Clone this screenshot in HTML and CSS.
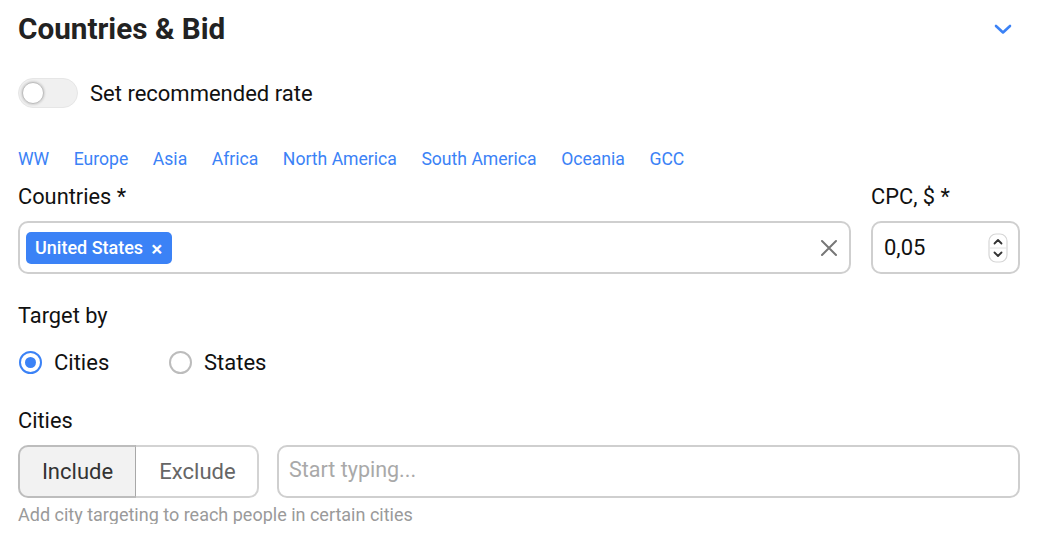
FILE: index.html
```html
<!DOCTYPE html>
<html>
<head>
<meta charset="utf-8">
<link rel="stylesheet" href="styles.css">
</head>
<body>
<div class="page">
  <div class="header">
    <h1 class="title">Countries &amp; Bid</h1>
    <svg class="chevron" width="18" height="11" viewBox="0 0 18 11"><path d="M2 2 L9 8.5 L16 2" fill="none" stroke="#3b82f6" stroke-width="2.6" stroke-linecap="round" stroke-linejoin="round"/></svg>
  </div>

  <div class="toggle-row">
    <span class="toggle"><span class="knob"></span></span>
    <span class="toggle-label">Set recommended rate</span>
  </div>

  <div class="regions">
    <a>WW</a><a>Europe</a><a>Asia</a><a>Africa</a><a>North America</a><a>South America</a><a>Oceania</a><a>GCC</a>
  </div>

  <div class="fields">
    <div class="field countries">
      <div class="label">Countries *</div>
      <div class="box countries-box">
        <span class="chip">United States <span class="chip-x">×</span></span>
        <svg class="clear" width="18" height="18" viewBox="0 0 18 18"><path d="M2 2 L16 16 M16 2 L2 16" stroke="#777" stroke-width="2" stroke-linecap="round"/></svg>
      </div>
    </div>
    <div class="field cpc">
      <div class="label">CPC, $ *</div>
      <div class="box cpc-box">
        <span class="value">0,05</span>
        <svg class="spin" width="20" height="30" viewBox="0 0 20 30"><rect x="1" y="1" width="18" height="28" rx="7" fill="#fff" stroke="#d6d6d6" stroke-width="1.2"/><line x1="1.5" y1="15" x2="18.5" y2="15" stroke="#e2e2e2" stroke-width="1"/><path d="M6.5 10.5 L10 7 L13.5 10.5" fill="none" stroke="#333" stroke-width="1.8" stroke-linecap="round" stroke-linejoin="round"/><path d="M6.5 19.5 L10 23 L13.5 19.5" fill="none" stroke="#333" stroke-width="1.8" stroke-linecap="round" stroke-linejoin="round"/></svg>
      </div>
    </div>
  </div>

  <div class="label target-label">Target by</div>
  <div class="radios">
    <label class="radio"><span class="dot on"></span>Cities</label>
    <label class="radio"><span class="dot"></span>States</label>
  </div>

  <div class="label cities-label">Cities</div>
  <div class="cities-row">
    <div class="segment">
      <span class="seg active">Include</span>
      <span class="seg">Exclude</span>
    </div>
    <div class="box search">Start typing...</div>
  </div>
  <div class="help">Add city targeting to reach people in certain cities</div>
</div>
</body>
</html>
```

FILE: styles.css
```css
html, body {
  margin: 0;
  padding: 0;
  background: #fff;
}
body {
  font-family: Roboto, "Liberation Sans", Arial, sans-serif;
  color: #111;
}
.page {
  width: 1002px;
  margin-left: 18px;
  display: flex;
  flex-direction: column;
}
.header {
  margin-top: 11px;
  height: 36px;
  display: flex;
  align-items: center;
  justify-content: space-between;
}
.title {
  margin: 0;
  font-size: 29.7px;
  font-weight: 700;
  line-height: 36px;
  color: #222;
}
.chevron {
  margin-right: 8px;
  margin-top: 1px;
}
.toggle-row {
  margin-top: 31px;
  height: 30px;
  display: flex;
  align-items: center;
}
.toggle {
  width: 60px;
  height: 30px;
  box-sizing: border-box;
  border-radius: 15px;
  background: #f0f0f0;
  border: 1px solid #e6e6e6;
  display: flex;
  align-items: center;
  padding-left: 3px;
}
.knob {
  width: 20px;
  height: 20px;
  border-radius: 50%;
  background: #fff;
  border: 1px solid #bdbdbd;
  box-shadow: 0 0 2px 1px rgba(0,0,0,0.12);
}
.toggle-label {
  margin-left: 12px;
  font-size: 22px;
  color: #111;
}
.regions {
  margin-top: 41px;
  height: 20px;
  display: flex;
  gap: 24.5px;
  font-size: 17.6px;
  line-height: 20px;
}
.regions a {
  color: #3b82f6;
  cursor: pointer;
}
.fields {
  margin-top: 16px;
  display: flex;
  gap: 20px;
}
.field {
  display: flex;
  flex-direction: column;
}
.countries { flex: 1; }
.cpc { width: 149px; }
.label {
  font-size: 21.8px;
  line-height: 24px;
  color: #111;
}
.box {
  box-sizing: border-box;
  height: 53px;
  border: 2px solid #cfcfcf;
  border-radius: 10px;
  display: flex;
  align-items: center;
}
.field .box { margin-top: 12px; }
.countries-box {
  padding: 0 8px 0 6px;
  justify-content: space-between;
}
.chip {
  height: 32px;
  box-sizing: border-box;
  padding: 0 10px 0 9px;
  background: #3b82f6;
  color: #fff;
  border-radius: 5px;
  font-size: 18px;
  font-weight: 500;
  display: flex;
  align-items: center;
}
.chip-x {
  margin-left: 8px;
  font-size: 21px;
  font-weight: 500;
  margin-top: 2px;
}
.clear { margin-right: 3px; }
.cpc-box {
  padding: 0 10px 0 11px;
  justify-content: space-between;
}
.value { font-size: 22px; color: #111; }
.spin { margin-top: 1px; }
.target-label { margin-top: 30px; }
.radios {
  margin-top: 22px;
  height: 24px;
  display: flex;
  gap: 0;
}
.radio {
  display: flex;
  align-items: center;
  font-size: 22px;
  width: 150px;
}
.dot {
  width: 23px;
  height: 23px;
  box-sizing: border-box;
  border-radius: 50%;
  border: 2px solid #bcbcbc;
  margin-left: 1px;
  margin-right: 12px;
  position: relative;
}
.dot.on {
  border-color: #3b82f6;
}
.dot.on::after {
  content: "";
  position: absolute;
  left: 4px;
  top: 4px;
  width: 11px;
  height: 11px;
  border-radius: 50%;
  background: #3b82f6;
}
.cities-label { margin-top: 35px; }
.cities-row {
  margin-top: 12px;
  display: flex;
  gap: 18px;
}
.segment {
  display: flex;
  height: 53px;
  width: 241px;
  box-sizing: border-box;
}
.seg {
  box-sizing: border-box;
  display: flex;
  align-items: center;
  justify-content: center;
  font-size: 22px;
  height: 53px;
}
.seg.active {
  width: 118px;
  background: #f2f2f2;
  color: #333;
  border: 2px solid #bdbdbd;
  border-right: 1px solid #a8a8a8;
  border-radius: 10px 0 0 10px;
}
.seg:not(.active) {
  flex: 1;
  color: #666;
  border: 2px solid #d3d3d3;
  border-left: none;
  border-radius: 0 10px 10px 0;
  padding-left: 2px;
}
.search {
  flex: 1;
  padding-left: 10px;
  font-size: 21.5px;
  color: #a9a9a9;
  align-items: center;
  padding-bottom: 4px;
}
.help {
  margin-top: 8px;
  font-size: 18px;
  line-height: 18px;
  color: #9a9a9a;
}
```
